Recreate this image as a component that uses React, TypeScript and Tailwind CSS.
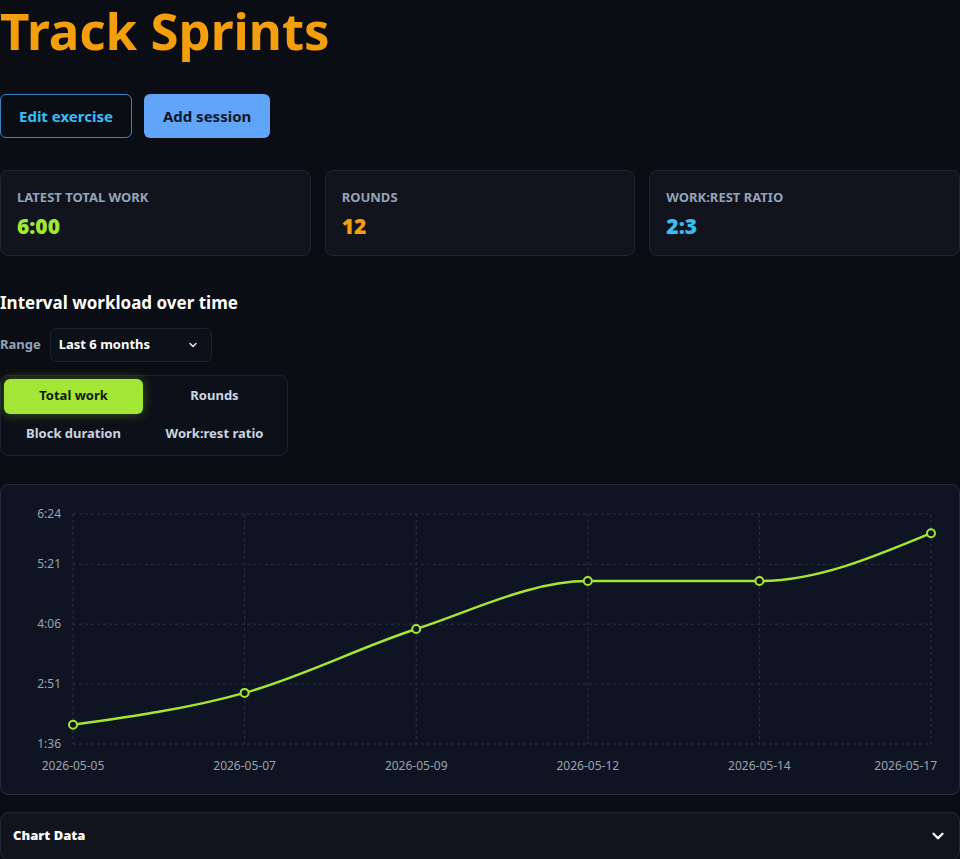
import React from 'react';

const stats = [
  { label: 'Latest total work', value: '6:00', color: 'text-[#a3e635]' },
  { label: 'Rounds', value: '12', color: 'text-[#f59e0b]' },
  { label: 'Work:rest ratio', value: '2:3', color: 'text-[#38bdf8]' },
];

const tabs = ['Total work', 'Rounds', 'Block duration', 'Work:rest ratio'];

// seconds of total work per session
const data = [
  { date: '2026-05-05', v: 120 },
  { date: '2026-05-07', v: 160 },
  { date: '2026-05-09', v: 240 },
  { date: '2026-05-12', v: 300 },
  { date: '2026-05-14', v: 300 },
  { date: '2026-05-17', v: 360 },
];

const yTicks = [96, 171, 246, 321, 384];
const X0 = 72;
const X1 = 930;
const Y0 = 29;
const Y1 = 259;
const yMin = 96;
const yMax = 384;

const px = (i: number) => X0 + (i * (X1 - X0)) / (data.length - 1);
const py = (v: number) => Y1 - ((v - yMin) * (Y1 - Y0)) / (yMax - yMin);
const fmt = (s: number) => `${Math.floor(s / 60)}:${String(s % 60).padStart(2, '0')}`;

// monotone cubic, same as d3 curveMonotoneX
function monotone(pts: [number, number][]) {
  const n = pts.length;
  const t: number[] = new Array(n).fill(0);
  const sgn = (a: number) => (a < 0 ? -1 : 1);
  for (let i = 1; i < n - 1; i++) {
    const [x0, y0] = pts[i - 1];
    const [x1, y1] = pts[i];
    const [x2, y2] = pts[i + 1];
    const h0 = x1 - x0;
    const h1 = x2 - x1;
    const s0 = (y1 - y0) / h0;
    const s1 = (y2 - y1) / h1;
    const p = (s0 * h1 + s1 * h0) / (h0 + h1);
    t[i] = (sgn(s0) + sgn(s1)) * Math.min(Math.abs(s0), Math.abs(s1), 0.5 * Math.abs(p)) || 0;
  }
  const sFirst = (pts[1][1] - pts[0][1]) / (pts[1][0] - pts[0][0]);
  const sLast = (pts[n - 1][1] - pts[n - 2][1]) / (pts[n - 1][0] - pts[n - 2][0]);
  t[0] = (3 * sFirst - t[1]) / 2;
  t[n - 1] = (3 * sLast - t[n - 2]) / 2;
  let d = `M${pts[0][0]},${pts[0][1]}`;
  for (let i = 0; i < n - 1; i++) {
    const [x0, y0] = pts[i];
    const [x1, y1] = pts[i + 1];
    const dx = (x1 - x0) / 3;
    d += `C${x0 + dx},${y0 + dx * t[i]},${x1 - dx},${y1 - dx * t[i + 1]},${x1},${y1}`;
  }
  return d;
}

const Chart: React.FC = () => {
  const pts = data.map((d, i) => [px(i), py(d.v)] as [number, number]);
  return (
    <svg viewBox="0 0 958 309" className="block w-full h-[309px]">
      <g stroke="#2a3343" strokeDasharray="3 3" strokeWidth="1">
        {yTicks.map((v) => (
          <line key={v} x1={X0} x2={X1} y1={py(v)} y2={py(v)} />
        ))}
        {data.map((d, i) => (
          <line key={d.date} x1={px(i)} x2={px(i)} y1={Y0} y2={Y1} />
        ))}
      </g>
      <g fill="#9ca3af" fontSize="12" textAnchor="end">
        {yTicks.map((v) => (
          <text key={v} x={60} y={py(v) + 4}>
            {fmt(v)}
          </text>
        ))}
      </g>
      <g fill="#9ca3af" fontSize="12">
        {data.map((d, i) => (
          <text
            key={d.date}
            x={i === data.length - 1 ? 936 : px(i)}
            y={285}
            textAnchor={i === data.length - 1 ? 'end' : 'middle'}
          >
            {d.date}
          </text>
        ))}
      </g>
      <path d={monotone(pts)} fill="none" stroke="#a3e635" strokeWidth="2.5" />
      {pts.map(([x, y]) => (
        <circle key={x} cx={x} cy={y} r="4" fill="#0f1422" stroke="#a3e635" strokeWidth="2" />
      ))}
    </svg>
  );
};

const App: React.FC = () => {
  return (
    <div
      className="min-h-screen bg-[#0a0d14] text-white"
      style={{ fontFamily: '"Noto Sans", "Open Sans", sans-serif' }}
    >
      <h1 className="text-[51px] leading-[60px] font-bold text-[#f59e0b]">Track Sprints</h1>

      <div className="mt-[34px] flex gap-3">
        <button className="h-11 px-[18px] rounded-md border border-[#3b82c4] text-[15px] font-bold text-[#38bdf8]">
          Edit exercise
        </button>
        <button className="h-11 px-[19px] rounded-md bg-[#60a5fa] text-[15px] font-bold text-[#0f172a]">
          Add session
        </button>
      </div>

      <div className="mt-8 grid grid-cols-3 gap-[14px]">
        {stats.map((s) => (
          <div key={s.label} className="h-[86px] rounded-lg border border-[#1f2533] bg-[#11141d] px-4 pt-[17px]">
            <div className="text-[13px] font-bold uppercase text-[#94a3b8]">{s.label}</div>
            <div className={`mt-1 text-[21px] leading-7 font-black ${s.color}`}>{s.value}</div>
          </div>
        ))}
      </div>

      <h2 className="mt-[34px] text-[17px] font-bold text-white">Interval workload over time</h2>

      <div className="mt-3 flex items-center gap-[9px]">
        <span className="text-[13px] font-bold text-[#94a3b8]">Range</span>
        <div className="flex h-[34px] w-[162px] items-center justify-between rounded-md border border-[#1c2230] bg-[#0c1018] pl-2 pr-3">
          <span className="text-[13px] font-bold text-white">Last 6 months</span>
          <svg width="12" height="12" viewBox="0 0 24 24" fill="none" stroke="#e5e7eb" strokeWidth="3" strokeLinecap="round" strokeLinejoin="round">
            <path d="m6 9 6 6 6-6" />
          </svg>
        </div>
      </div>

      <div className="mt-[13px] grid w-[288px] grid-cols-2 gap-x-0.5 gap-y-[3px] rounded-lg border border-[#1c2230] bg-[#0c1018] p-[3px]">
        {tabs.map((t, i) => (
          <button
            key={t}
            className={
              i === 0
                ? 'h-[35px] rounded-md bg-[#a3e635] text-[13px] font-bold text-[#0f1a05] shadow-[0_0_12px_rgba(163,230,53,0.35)]'
                : 'h-[35px] rounded-md text-[13px] font-bold text-[#cbd5e1]'
            }
          >
            {t}
          </button>
        ))}
      </div>

      <div className="mt-7 rounded-lg border border-[#232b3b] bg-[#0f1422]">
        <Chart />
      </div>

      <div className="mt-[17px] flex h-12 items-center justify-between rounded-lg border border-[#1f2533] bg-[#11141d] pl-3 pr-3">
        <span className="text-[13px] font-black text-white">Chart Data</span>
        <svg width="18" height="18" viewBox="0 0 24 24" fill="none" stroke="#ffffff" strokeWidth="3" strokeLinecap="round" strokeLinejoin="round">
          <path d="m6 9 6 6 6-6" />
        </svg>
      </div>
    </div>
  );
};

export default App;
